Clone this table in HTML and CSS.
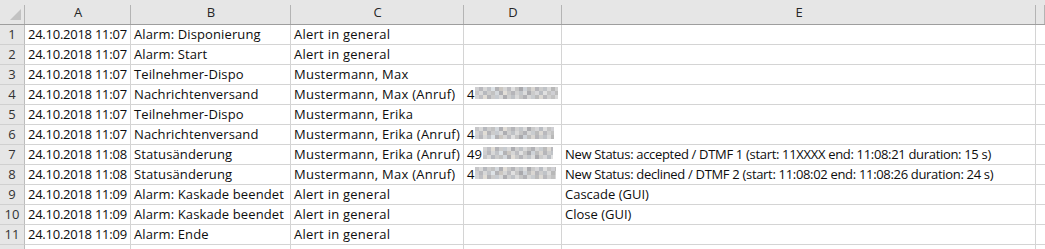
FILE: index.html
```html
<!DOCTYPE html>
<html lang="de">
<head>
<meta charset="utf-8">
<title>Alarm-Protokoll</title>
<link rel="stylesheet" href="styles.css">
</head>
<body>
<div class="sheet">
  <div class="corner"><span class="tri"></span></div>
  <div class="colhead">A</div>
  <div class="colhead">B</div>
  <div class="colhead">C</div>
  <div class="colhead">D</div>
  <div class="colhead">E</div>
  <div class="colhead rest"></div>

  <div class="rowhead">1</div>
  <div class="cell date">24.10.2018 11:07</div><div class="cell evt">Alarm: Disponierung</div><div class="cell who">Alert in general</div><div class="cell"></div><div class="cell"></div><div class="cell rest"></div>

  <div class="rowhead">2</div>
  <div class="cell date">24.10.2018 11:07</div><div class="cell evt">Alarm: Start</div><div class="cell who">Alert in general</div><div class="cell"></div><div class="cell"></div><div class="cell rest"></div>

  <div class="rowhead">3</div>
  <div class="cell date">24.10.2018 11:07</div><div class="cell evt">Teilnehmer-Dispo</div><div class="cell who">Mustermann, Max</div><div class="cell"></div><div class="cell"></div><div class="cell rest"></div>

  <div class="rowhead">4</div>
  <div class="cell date">24.10.2018 11:07</div><div class="cell evt">Nachrichtenversand</div><div class="cell who">Mustermann, Max (Anruf)</div><div class="cell num">4<span class="blur b4"></span></div><div class="cell"></div><div class="cell rest"></div>

  <div class="rowhead">5</div>
  <div class="cell date">24.10.2018 11:07</div><div class="cell evt">Teilnehmer-Dispo</div><div class="cell who">Mustermann, Erika</div><div class="cell"></div><div class="cell"></div><div class="cell rest"></div>

  <div class="rowhead">6</div>
  <div class="cell date">24.10.2018 11:07</div><div class="cell evt">Nachrichtenversand</div><div class="cell who">Mustermann, Erika (Anruf)</div><div class="cell num">4<span class="blur b6"></span></div><div class="cell"></div><div class="cell rest"></div>

  <div class="rowhead">7</div>
  <div class="cell date">24.10.2018 11:08</div><div class="cell evt">Statusänderung</div><div class="cell who">Mustermann, Erika (Anruf)</div><div class="cell num">49<span class="blur b7"></span></div><div class="cell status">New Status: accepted / DTMF 1 (start: 11XXXX end: 11:08:21 duration: 15 s)</div><div class="cell rest"></div>

  <div class="rowhead">8</div>
  <div class="cell date">24.10.2018 11:08</div><div class="cell evt">Statusänderung</div><div class="cell who">Mustermann, Max (Anruf)</div><div class="cell num">4<span class="blur b8"></span></div><div class="cell status">New Status: declined / DTMF 2 (start: 11:08:02 end: 11:08:26 duration: 24 s)</div><div class="cell rest"></div>

  <div class="rowhead">9</div>
  <div class="cell date">24.10.2018 11:09</div><div class="cell evt">Alarm: Kaskade beendet</div><div class="cell who">Alert in general</div><div class="cell"></div><div class="cell">Cascade (GUI)</div><div class="cell rest"></div>

  <div class="rowhead">10</div>
  <div class="cell date">24.10.2018 11:09</div><div class="cell evt">Alarm: Kaskade beendet</div><div class="cell who">Alert in general</div><div class="cell"></div><div class="cell">Close (GUI)</div><div class="cell rest"></div>

  <div class="rowhead">11</div>
  <div class="cell date">24.10.2018 11:09</div><div class="cell evt">Alarm: Ende</div><div class="cell who">Alert in general</div><div class="cell"></div><div class="cell"></div><div class="cell rest"></div>

  <div class="rowhead"></div>
  <div class="cell"></div><div class="cell"></div><div class="cell"></div><div class="cell"></div><div class="cell"></div><div class="cell rest"></div>
</div>
</body>
</html>
```

FILE: styles.css
```css
html, body {
  margin: 0;
  padding: 0;
  background: #ffffff;
  overflow: hidden;
}

.sheet {
  display: grid;
  grid-template-columns: 25px 106px 160px 173px 98px 474px 1fr;
  grid-template-rows: 25px;
  grid-auto-rows: 20px;
  font-family: "Open Sans", "Liberation Sans", sans-serif;
  font-size: 13px;
  color: #0d0d0d;
}

.corner,
.colhead {
  position: relative;
  background: #e6e6e6;
  border-bottom: 1px solid #9e9e9e;
  line-height: 25px;
  text-align: center;
  color: #262626;
}

.corner::after,
.colhead::after {
  content: "";
  position: absolute;
  right: 0;
  top: 5px;
  bottom: 0;
  width: 1px;
  background: #b4b4b4;
}

.corner {
  display: flex;
  justify-content: flex-end;
  align-items: flex-end;
  padding: 0 4px 4px 0;
}

.tri {
  width: 11px;
  height: 11px;
  background: #c2c2c2;
  clip-path: polygon(100% 0, 100% 100%, 0 100%);
}

.rowhead {
  background: #e6e6e6;
  border-right: 1px solid #bdbdbd;
  border-bottom: 1px solid #d0d0d0;
  text-align: center;
  line-height: 19px;
  color: #333333;
}

.cell {
  border-right: 1px solid #d4d4d4;
  border-bottom: 1px solid #d4d4d4;
  padding: 0 2px 0 3px;
  line-height: 19px;
  white-space: nowrap;
  overflow: hidden;
}

.cell.rest {
  border-right: none;
}

.cell.date {
  letter-spacing: -0.25px;
}

.cell.evt {
  letter-spacing: 0.12px;
}

.cell.who {
  letter-spacing: 0.25px;
}

.cell.status {
  letter-spacing: -0.32px;
}

.blur {
  display: inline-block;
  height: 12px;
  vertical-align: baseline;
  --g1: linear-gradient(90deg, #cfcfd1 0 4px, #b9b9bd 4px 8px, #d8d8d8 8px 12px, #c2c4c8 12px 16px, #dde2e6 16px 20px, #b3b3b6 20px 24px, #cbc7c2 24px 28px, #d6d6d6 28px 32px, #bdbdc1 32px 36px, #e0e0e0 36px 40px, #c6c6c6 40px 44px, #a9a9ad 44px 48px, #cfd3d8 48px 52px, #bebebe 52px 56px, #d9d6d2 56px 60px, #b6b6ba 60px 64px, #cdcdcd 64px 68px, #c0c3c7 68px 72px, #dadada 72px 76px, #b8b8b8 76px 80px, #d2d2d2 80px 84px);
  --g2: linear-gradient(90deg, #c6c6c8 0 4px, #d9d9d9 4px 8px, #b7b9be 8px 12px, #cdcdcd 12px 16px, #c2c2c2 16px 20px, #d4d8dc 20px 24px, #b0b0b4 24px 28px, #e2ded8 28px 32px, #c9c9c9 32px 36px, #b5b5b9 36px 40px, #d1d1d1 40px 44px, #c3c6ca 44px 48px, #dcdcdc 48px 52px, #acacb0 52px 56px, #cbcbcb 56px 60px, #d7d7d9 60px 64px, #babdc2 64px 68px, #e0e0e0 68px 72px, #c4c4c4 72px 76px, #cfcfd3 76px 80px, #bdbdbd 80px 84px);
  --g3: linear-gradient(90deg, #d3d3d3 0 4px, #c0c0c4 4px 8px, #e1ddd6 8px 12px, #b4b4b8 12px 16px, #cccccc 16px 20px, #c7cbd0 20px 24px, #d9d9d9 24px 28px, #aeaeb2 28px 32px, #cfcfcf 32px 36px, #bfc2c6 36px 40px, #dadada 40px 44px, #c5c5c5 44px 48px, #b2b2b6 48px 52px, #d6d6d6 52px 56px, #c9cccf 56px 60px, #bbbbbb 60px 64px, #dcd9d4 64px 68px, #b9b9bd 68px 72px, #d0d0d0 72px 76px, #c2c2c2 76px 80px, #d8d8d8 80px 84px);
  background-repeat: no-repeat;
  background-size: 100% 4px, 100% 4px, 100% 4px;
  background-position: left 0 top 0, left 0 top 4px, left 0 top 8px;
}

.b4 {
  width: 83px;
  margin-left: 1px;
  background-image: var(--g1), var(--g2), var(--g3);
}

.b6 {
  width: 79px;
  margin-left: 1px;
  background-image: var(--g2), var(--g3), var(--g1);
}

.b7 {
  width: 70px;
  margin-left: 1px;
  background-image: var(--g3), var(--g1), var(--g2);
}

.b8 {
  width: 81px;
  margin-left: 1px;
  background-image: var(--g2), var(--g1), var(--g3);
}
```
